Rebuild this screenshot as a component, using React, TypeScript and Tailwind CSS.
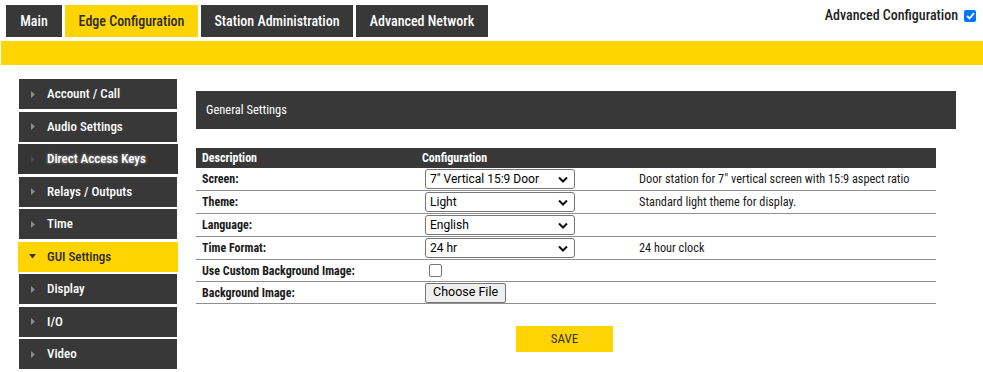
import React from "react";

const font = "font-['Roboto_Condensed','Liberation_Sans_Narrow',Roboto,sans-serif]";

const tabs = [
  { label: "Main", active: false, w: "w-[56px]" },
  { label: "Edge Configuration", active: true, w: "w-[133px]" },
  { label: "Station Administration", active: false, w: "w-[152px]" },
  { label: "Advanced Network", active: false, w: "w-[132px]" },
];

const side = [
  "Account / Call",
  "Audio Settings",
  "Direct Access Keys",
  "Relays / Outputs",
  "Time",
  "GUI Settings",
  "Display",
  "I/O",
  "Video",
];

function Arrow({ down, dim }: { down?: boolean; dim?: boolean }) {
  if (down)
    return (
      <svg width="7" height="5" viewBox="0 0 7 5" className="shrink-0">
        <polygon points="0,0 7,0 3.5,4.5" fill="#3a3300" />
      </svg>
    );
  return (
    <svg width="4" height="7" viewBox="0 0 4 7" className="shrink-0">
      <polygon points="0,0 4,3.5 0,7" fill={dim ? "#4a4a4a" : "#8a8a8a"} />
    </svg>
  );
}

function Select({ value }: { value: string }) {
  return (
    <div className="flex h-[20px] w-[150px] items-center justify-between rounded-[3px] border border-[#767676] bg-white pl-[4px] pr-[6px] font-['Roboto',sans-serif] text-[12px] text-black">
      <span>{value}</span>
      <svg width="10" height="7" viewBox="0 0 10 7">
        <polyline points="1,1.5 5,5.5 9,1.5" fill="none" stroke="#111" strokeWidth="2" />
      </svg>
    </div>
  );
}

const rows: { label: string; cfg: React.ReactNode; desc: string; h: string }[] = [
  { label: "Screen:", cfg: <Select value={'7" Vertical 15:9 Door'} />, desc: 'Door station for 7" vertical screen with 15:9 aspect ratio', h: "h-[23px]" },
  { label: "Theme:", cfg: <Select value="Light" />, desc: "Standard light theme for display.", h: "h-[23px]" },
  { label: "Language:", cfg: <Select value="English" />, desc: "", h: "h-[23px]" },
  { label: "Time Format:", cfg: <Select value="24 hr" />, desc: "24 hour clock", h: "h-[23px]" },
  {
    label: "Use Custom Background Image:",
    cfg: <div className="ml-[4px] h-[13px] w-[13px] rounded-[2px] border border-[#767676] bg-white" />,
    desc: "",
    h: "h-[22px]",
  },
  {
    label: "Background Image:",
    cfg: (
      <div className="inline-flex h-[20px] w-fit items-center rounded-[2px] border border-[#767676] bg-[#efefef] px-[7px] font-['Roboto',sans-serif] text-[12.5px] text-black">
        Choose File
      </div>
    ),
    desc: "",
    h: "h-[22px]",
  },
];

export default function App() {
  return (
    <div className={`${font} h-[372px] w-[983px] overflow-hidden bg-white text-[#222]`}>
      <div className="flex items-start justify-between">
        <div className="ml-[6px] mt-[5px] flex gap-[3px]">
          {tabs.map((t) => (
            <div
              key={t.label}
              className={`flex h-[32px] ${t.w} items-center justify-center text-[14px] font-medium ${
                t.active ? "bg-[#ffd400] text-[#2a2a2a]" : "bg-[#383838] text-white"
              }`}
            >
              {t.label}
            </div>
          ))}
        </div>
        <div className="mr-[7px] mt-[5px] flex items-center gap-[6px] text-[14px] font-medium text-[#222]">
          <span>Advanced Configuration</span>
          <div className="flex h-[12px] w-[12px] items-center justify-center rounded-[2px] bg-[#0075ff]">
            <svg width="9" height="8" viewBox="0 0 9 8">
              <polyline points="1,4 3.5,6.5 8,1.2" fill="none" stroke="white" strokeWidth="1.8" />
            </svg>
          </div>
        </div>
      </div>

      <div className="ml-[1px] mt-[4px] h-[24px] bg-[#ffd400]" />

      <div className="mt-[14px] flex">
        <div className="ml-[19px] flex w-[158px] flex-col gap-[2.5px]">
          {side.map((s) => {
            const active = s === "GUI Settings";
            const hover = s === "Direct Access Keys";
            return (
              <div
                key={s}
                className={`flex h-[30px] items-center gap-[11px] text-[13px] font-medium ${
                  active
                    ? "-mx-[1px] bg-[#ffd400] pl-[11px] text-[#2a2a2a]"
                    : hover
                    ? "-mx-[1px] bg-[#353535] pl-[11px] font-bold text-white [text-shadow:0_0_3px_rgba(255,255,255,0.6)]"
                    : "bg-[#383838] pl-[10px] text-white"
                }`}
              >
                <span className="flex w-[7px] justify-center">
                  <Arrow down={active} dim={hover} />
                </span>
                <span>{s}</span>
              </div>
            );
          })}
        </div>

        <div className="ml-[19px] mt-[12px] flex w-[760px] flex-col">
          <div className="flex h-[38px] items-center bg-[#383838] pl-[10px] text-[12.5px] font-normal text-white">
            General Settings
          </div>

          <div className="mt-[19px] w-[740px]">
            <div className="flex h-[20px] items-center bg-[#383838] text-[12px] font-bold text-white">
              <div className="w-[226px] pl-[6px]">Description</div>
              <div>Configuration</div>
            </div>
            {rows.map((r) => (
              <div key={r.label} className={`flex ${r.h} items-center border-b border-[#8f8f8f]`}>
                <div className="w-[229px] pl-[6px] text-[12px] font-bold text-[#1a1a1a]">{r.label}</div>
                <div className="flex w-[214px]">{r.cfg}</div>
                <div className="text-[12.3px] text-[#1a1a1a]">{r.desc}</div>
              </div>
            ))}
            <div className="mt-[22px] flex justify-center">
              <div className="mr-[3px] flex h-[26px] w-[97px] items-center justify-center bg-[#ffd400] text-[13px] text-[#333]">
                SAVE
              </div>
            </div>
          </div>
        </div>
      </div>
    </div>
  );
}
